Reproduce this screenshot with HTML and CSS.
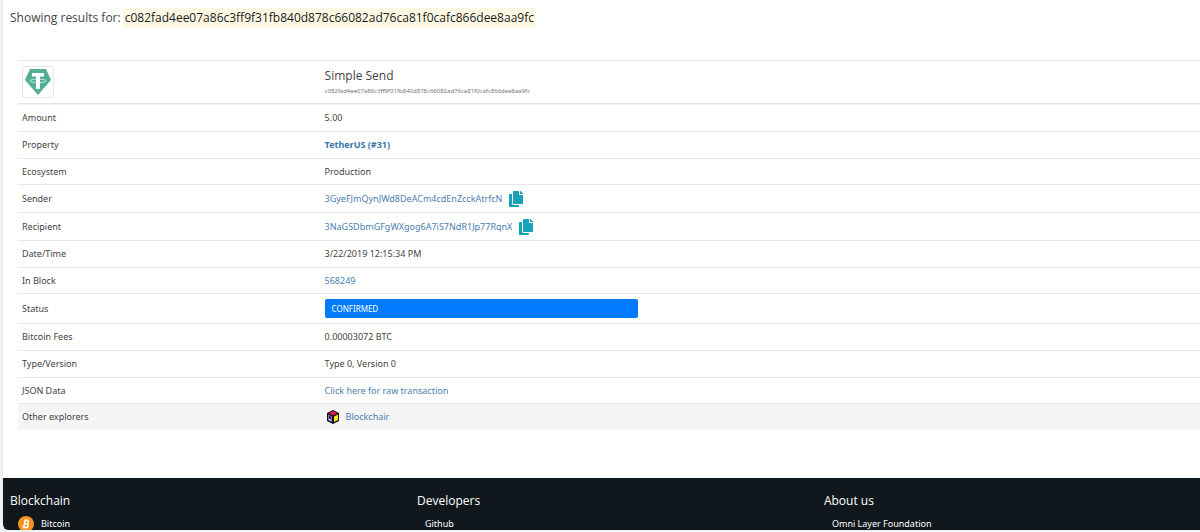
FILE: index.html
```html
<!DOCTYPE html>
<html lang="en">
<head>
  <meta charset="UTF-8">
  <meta name="viewport" content="width=device-width, initial-scale=1.0">
  <title>Transaction details</title>
  <link rel="stylesheet" href="styles.css">
</head>
<body>
  <svg width="0" height="0" class="sprite">
    <symbol id="copy" viewBox="0 0 448 512">
      <path d="M320 448v40c0 13-11 24-24 24H24c-13 0-24-11-24-24V120c0-13 11-24 24-24h72v296c0 31 25 56 56 56h168zm0-344V0H152c-13 0-24 11-24 24v368c0 13 11 24 24 24h272c13 0 24-11 24-24V128H344c-13 0-24-11-24-24zm121-31L375 7c-5-5-11-7-17-7h-6v96h96v-6c0-6-3-12-7-17z"/>
    </symbol>
  </svg>

  <div class="page">
    <main>
      <div class="search">
        <span>Showing results for:</span>
        <mark>c082fad4ee07a86c3ff9f31fb840d878c66082ad76ca81f0cafc866dee8aa9fc</mark>
      </div>

      <table class="details">
        <thead>
          <tr>
            <td>
              <div class="logo">
                <svg viewBox="0 0 26 26" width="26" height="26">
                  <path fill="#50af95" d="M5 0h16l5 11-13 15L0 11z"/>
                  <path fill="none" stroke="#fff" stroke-width="0.7" d="M11 10.200c-3.500.2-6 .8-6 1.700s3.600 1.800 8 1.800 8-.8 8-1.800-2.500-1.500-6-1.700"/>
                  <path fill="#fff" d="M7 4h12v3.500h-4V20h-4V7.500H7z"/>
                </svg>
              </div>
            </td>
            <td>
              <h1>Simple Send</h1>
              <small>c082fad4ee07a86c3ff9f31fb840d878c66082ad76ca81f0cafc866dee8aa9fc</small>
            </td>
          </tr>
        </thead>
        <tbody>
          <tr><th scope="row">Amount</th><td>5.00</td></tr>
          <tr><th scope="row">Property</th><td><a href="#" class="property">TetherUS (#31)</a></td></tr>
          <tr class="compact"><th scope="row">Ecosystem</th><td>Production</td></tr>
          <tr class="address">
            <th scope="row">Sender</th>
            <td>
              <div class="copyable">
                <a href="#">3GyeFJmQynJWd8DeACm4cdEnZcckAtrfcN</a>
                <button type="button" aria-label="Copy sender"><svg width="14" height="16"><use href="#copy"/></svg></button>
              </div>
            </td>
          </tr>
          <tr class="address">
            <th scope="row">Recipient</th>
            <td>
              <div class="copyable">
                <a href="#">3NaGSDbmGFgWXgog6A7iS7NdR1Jp77RqnX</a>
                <button type="button" aria-label="Copy recipient"><svg width="14" height="16"><use href="#copy"/></svg></button>
              </div>
            </td>
          </tr>
          <tr><th scope="row">Date/Time</th><td>3/22/2019 12:15:34 PM</td></tr>
          <tr class="compact"><th scope="row">In Block</th><td><a href="#">568249</a></td></tr>
          <tr class="state"><th scope="row">Status</th><td><div class="status">CONFIRMED</div></td></tr>
          <tr><th scope="row">Bitcoin Fees</th><td>0.00003072 BTC</td></tr>
          <tr><th scope="row">Type/Version</th><td>Type 0, Version 0</td></tr>
          <tr class="compact"><th scope="row">JSON Data</th><td><a href="#">Click here for raw transaction</a></td></tr>
          <tr class="explorers">
            <th scope="row">Other explorers</th>
            <td>
              <a href="#" class="explorer">
                <svg viewBox="0 0 14 14" width="14" height="14">
                  <path fill="#111" d="M7 0l6 3v8l-6 3-6-3V3z"/>
                  <path fill="#e0184d" d="M7 1l4.500 2.200L7 5.400 2.500 3.200z"/>
                  <path fill="#8a6fd8" d="M2 4.500l4 2v5.500l-4-2z"/>
                  <path fill="#ffe81a" d="M8 6.500l4-2v5.500l-4 2z"/>
                  <path fill="#111" d="M3 6l2 1v2L3 8z"/>
                  <path fill="#fff" d="M3 9l2 1v1l-2-1z"/>
                </svg>
                Blockchair
              </a>
            </td>
          </tr>
        </tbody>
      </table>
    </main>

    <footer>
      <div class="column">
        <h2>Blockchain</h2>
        <a href="#">
          <svg viewBox="0 0 16 16" width="16" height="16">
            <circle cx="8" cy="8" r="8" fill="#f7931a"/>
            <g transform="rotate(14 8 8)" fill="none" stroke="#fff">
              <path stroke-width="1.4" d="M5 4.700h3.500a1.600 1.600 0 0 1 0 3.200H6.400h2.400a1.700 1.700 0 0 1 0 3.400H5M6.400 4.700v6.600"/>
              <path stroke-width="1" d="M7 3v2M9 3v2M7 11v2M9 11v2"/>
            </g>
          </svg>
          Bitcoin
        </a>
      </div>
      <div class="column">
        <h2>Developers</h2>
        <a href="#">Github</a>
      </div>
      <div class="column">
        <h2>About us</h2>
        <a href="#">Omni Layer Foundation</a>
      </div>
    </footer>
  </div>
</body>
</html>
```
FILE: styles.css
```css
* {
  box-sizing: border-box;
}

body {
  margin: 0;
  font-family: "Noto Sans", "Open Sans", sans-serif;
  font-size: 9px;
  color: #444;
  background: #f1f2f3;
}

a {
  color: #4c80ad;
  text-decoration: none;
}

.sprite {
  display: block;
}

.page {
  display: flex;
  flex-direction: column;
  height: calc(100vh - 2px);
  margin-left: 2px;
  background: #fff;
  border-left: 1px solid #eee;
  border-bottom-left-radius: 6px;
  overflow: hidden;
}

main {
  flex-shrink: 0;
  padding: 8px 0 48px 7px;
}

.search,
h1,
h2 {
  font-family: "Open Sans", sans-serif;
  font-size: 12px;
}

.search {
  display: flex;
  gap: 2px;
  line-height: 20px;
}

.search mark {
  padding: 0 2px;
  color: #222;
  background: #fcf8e3;
}

/* Transaction table */
.details {
  width: calc(100% - 8px);
  margin: 32px 0 0 8px;
  border-collapse: separate;
  border-spacing: 0;
}

.details th,
.details td {
  padding: 4px;
  border-top: 1px solid #e6e9eb;
  font-weight: normal;
  line-height: 18px;
  text-align: left;
  vertical-align: middle;
}

.details td:first-child,
.details th {
  width: 25.6%;
}

.details .compact th,
.details .compact td {
  line-height: 17px;
}

.details .address th,
.details .address td {
  line-height: 19px;
}

.details thead td {
  height: 44px;
  border-bottom: 1px solid #dfe4e6;
}

.details tbody tr:first-child th,
.details tbody tr:first-child td {
  border-top: 1px solid #eef1f2;
}

.logo {
  display: flex;
  align-items: center;
  justify-content: center;
  width: 32px;
  height: 32px;
  border: 1px solid #e6e6e6;
  border-radius: 3px;
}

h1 {
  margin: 0;
  font-weight: normal;
  line-height: 18px;
}

.details small {
  display: block;
  font-size: 6px;
  line-height: 12px;
  color: #777;
}

.property {
  font-weight: bold;
  color: #3a76a8;
}

.copyable {
  display: flex;
  align-items: center;
  gap: 7px;
}

.copyable button {
  display: flex;
  padding: 0;
  border: 0;
  background: none;
  color: #17a2b8;
  cursor: pointer;
}

.copyable svg {
  fill: currentColor;
}

.status {
  width: 36%;
  padding: 0 7px;
  border-radius: 2px;
  font-size: 8px;
  line-height: 19px;
  color: #fff;
  background: #007bff;
}

.details .state th,
.details .state td {
  padding-top: 5px;
  padding-bottom: 5px;
}

.explorers {
  background: #f5f5f5;
}

.explorer {
  display: flex;
  align-items: center;
  gap: 6px;
  padding-left: 1px;
}

/* Footer */
footer {
  display: flex;
  flex: 1;
  background: #10181e;
  overflow: hidden;
}

.column {
  flex: 0 0 34%;
  padding: 14px 7px;
  color: #fff;
}

h2 {
  margin: 0;
  font-weight: normal;
  line-height: 18px;
}

.column a {
  display: flex;
  align-items: center;
  gap: 7px;
  margin-top: 5px;
  padding-left: 8px;
  line-height: 18px;
  color: #fff;
}
```
